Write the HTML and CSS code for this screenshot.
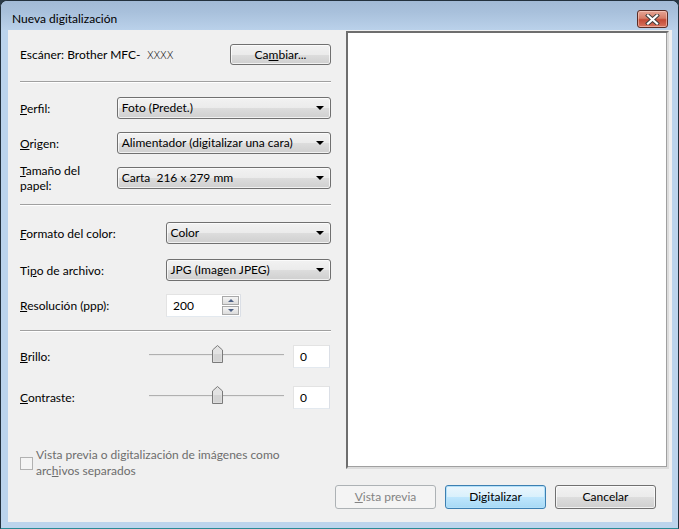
FILE: index.html
```html
<!DOCTYPE html>
<html lang="es">
<head>
  <meta charset="UTF-8">
  <title>Nueva digitalización</title>
  <link rel="stylesheet" href="styles.css">
</head>
<body>
  <div class="ventana">
    <div class="titulo">
      <span class="titulo-texto">Nueva digitalización</span>
      <button class="cerrar" aria-label="Cerrar">
        <svg width="15" height="11" viewBox="0 0 15 11">
          <path d="M3 1.5 L12 9.5 M12 1.5 L3 9.5" stroke="#3a3a3a" stroke-width="4" stroke-linecap="square" fill="none"/>
          <path d="M3 1.5 L12 9.5 M12 1.5 L3 9.5" stroke="#fff" stroke-width="2.2" stroke-linecap="square" fill="none"/>
        </svg>
      </button>
    </div>

    <div class="cliente">
      <div class="principal">
        <div class="panel">
          <div class="fila escaner">
            <span>Escáner: Brother MFC-&nbsp; <span class="modelo">XXXX</span></span>
            <button class="boton cambiar">Ca<u>m</u>biar...</button>
          </div>

          <div class="separador sep1"></div>

          <div class="fila f-perfil">
            <label class="etiqueta corta"><u>P</u>erfil:</label>
            <div class="combo ancho">Foto (Predet.)<span class="flecha"></span></div>
          </div>
          <div class="fila f-origen">
            <label class="etiqueta corta"><u>O</u>rigen:</label>
            <div class="combo ancho">Alimentador (digitalizar una cara)<span class="flecha"></span></div>
          </div>
          <div class="fila f-papel">
            <label class="etiqueta corta dos-lineas"><u>T</u>amaño del<br>papel:</label>
            <div class="combo ancho">Carta&nbsp; 216 x 279 mm<span class="flecha"></span></div>
          </div>

          <div class="separador sep2"></div>

          <div class="fila f-formato">
            <label class="etiqueta larga"><u>F</u>ormato del color:</label>
            <div class="combo estrecho">Color<span class="flecha"></span></div>
          </div>
          <div class="fila f-tipo">
            <label class="etiqueta larga">Ti<u>p</u>o de archivo:</label>
            <div class="combo estrecho">JPG (Imagen JPEG)<span class="flecha"></span></div>
          </div>
          <div class="fila f-resolucion">
            <label class="etiqueta larga"><u>R</u>esolución (ppp):</label>
            <div class="campo resolucion">
              <span>200</span>
              <div class="giro">
                <div class="giro-btn"><span class="tri arriba"></span></div>
                <div class="giro-btn"><span class="tri abajo"></span></div>
              </div>
            </div>
          </div>

          <div class="separador sep3"></div>

          <div class="fila f-brillo">
            <label class="etiqueta deslizador-et"><u>B</u>rillo:</label>
            <svg class="deslizador" width="136" height="20" viewBox="0 0 136 20">
              <line x1="0" y1="9.5" x2="135" y2="9.5" stroke="#b0b0b0"/>
              <line x1="0" y1="10.5" x2="135" y2="10.5" stroke="#e8e8e8"/>
              <path d="M63.5 17.5 V5 L68.5 0.5 L73.5 5 V17.5 Z" fill="#e3e3e3" stroke="#7a7a7a"/>
              <path d="M64.5 16.5 V9 H72.5 V16.5 Z" fill="#d4d4d4"/>
            </svg>
            <div class="campo valor">0</div>
          </div>
          <div class="fila f-contraste">
            <label class="etiqueta deslizador-et"><u>C</u>ontraste:</label>
            <svg class="deslizador" width="136" height="20" viewBox="0 0 136 20">
              <line x1="0" y1="9.5" x2="135" y2="9.5" stroke="#b0b0b0"/>
              <line x1="0" y1="10.5" x2="135" y2="10.5" stroke="#e8e8e8"/>
              <path d="M63.5 17.5 V5 L68.5 0.5 L73.5 5 V17.5 Z" fill="#e3e3e3" stroke="#7a7a7a"/>
              <path d="M64.5 16.5 V9 H72.5 V16.5 Z" fill="#d4d4d4"/>
            </svg>
            <div class="campo valor">0</div>
          </div>

          <div class="casilla">
            <span class="caja"></span>
            <span class="casilla-texto">Vista previa o digitalización de imágenes como<br>arc<u>h</u>ivos separados</span>
          </div>
        </div>

        <div class="vista"></div>
      </div>

      <div class="pie">
        <button class="boton deshabilitado"><u>V</u>ista previa</button>
        <button class="boton predeterminado">Digitalizar</button>
        <button class="boton">Cancelar</button>
      </div>
    </div>
  </div>
</body>
</html>
```

FILE: styles.css
```css
* {
  box-sizing: border-box;
}

body {
  margin: 0;
  width: 679px;
  height: 529px;
  overflow: hidden;
  background: #2b3a47;
  font-family: 'Lato', 'Liberation Sans', sans-serif;
  font-size: 12px;
  color: #000;
}

.ventana {
  width: 679px;
  height: 529px;
  border: 1px solid #23313d;
  border-bottom-color: #2a8a95;
  border-radius: 7px 7px 0 0;
  background: #bcd4ec;
  display: flex;
  flex-direction: column;
}

.titulo {
  height: 29px;
  display: flex;
  align-items: flex-start;
  justify-content: space-between;
  padding: 0 10px 0 11px;
  border-radius: 6px 6px 0 0;
  background: linear-gradient(to bottom, #a2bad6 0%, #a9c1dc 40%, #bad1ea 100%);
}

.titulo-texto {
  margin-top: 10px;
  font-size: 12px;
  color: #000;
}

.cerrar {
  margin-top: 9px;
  width: 31px;
  height: 18px;
  padding: 0;
  border: 1px solid #5a2d26;
  border-radius: 3px;
  background: linear-gradient(to bottom, #e6a595 0%, #d67d68 45%, #c34a36 55%, #d8745e 100%);
  box-shadow: inset 0 0 0 1px rgba(255, 220, 210, 0.5);
  display: flex;
  align-items: center;
  justify-content: center;
}

.cliente {
  flex: 1;
  margin: 0 6px 6px 7px;
  background: #f0f0f0;
  display: flex;
  flex-direction: column;
}

.principal {
  display: flex;
  height: 441px;
}

.panel {
  width: 311px;
  margin-left: 12px;
  display: flex;
  flex-direction: column;
}

.fila {
  display: flex;
  align-items: center;
}

.escaner {
  margin-top: 14px;
  height: 21px;
  justify-content: space-between;
}

.modelo {
  font-family: 'DejaVu Sans', sans-serif;
  font-size: 10.5px;
  font-weight: 200;
  letter-spacing: -0.6px;
  color: #000;
}

.separador {
  height: 2px;
  border-top: 1px solid #a0a0a0;
  border-bottom: 1px solid #fff;
}

.sep1 { margin-top: 16px; }
.sep2 { margin-top: 11px; }
.sep3 { margin-top: 13px; }

.f-perfil { margin-top: 14px; }
.f-origen { margin-top: 13px; }
.f-papel { margin-top: 9px; height: 30px; }
.f-formato { margin-top: 16px; }
.f-tipo { margin-top: 15px; }
.f-resolucion { margin-top: 13px; }
.f-brillo { margin-top: 13px; }
.f-contraste { margin-top: 18px; }

.etiqueta.corta { width: 97px; }
.etiqueta.larga { width: 146px; }
.etiqueta.deslizador-et { width: 129px; }

.dos-lineas {
  line-height: 15px;
}

.combo {
  position: relative;
  height: 22px;
  padding: 0 0 1px 4px;
  display: flex;
  align-items: center;
  border: 1px solid #707070;
  border-radius: 3px;
  background: linear-gradient(to bottom, #f2f2f2 0%, #ebebeb 50%, #dddddd 51%, #cfcfcf 100%);
  box-shadow: inset 0 0 0 1px rgba(255, 255, 255, 0.7);
}

.combo.ancho { width: 215px; }
.combo.estrecho { width: 166px; }

.flecha {
  position: absolute;
  right: 6px;
  top: 8px;
  border-left: 4px solid transparent;
  border-right: 4px solid transparent;
  border-top: 4px solid #000;
}

.campo {
  height: 23px;
  border: 1px solid #abadb3;
  border-top-color: #e3e3e3;
  border-left-color: #e3e3e3;
  border-right-color: #dbdfe6;
  border-bottom-color: #e3e9ef;
  background: #fff;
  display: flex;
  align-items: center;
  padding-left: 6px;
}

.resolucion {
  width: 75px;
  justify-content: space-between;
  padding-right: 1px;
}

.giro {
  display: flex;
  flex-direction: column;
  gap: 1px;
}

.giro-btn {
  width: 17px;
  height: 9px;
  border: 1px solid #a8a8a8;
  background: linear-gradient(to bottom, #f5f5f5, #dcdcdc);
  display: flex;
  align-items: center;
  justify-content: center;
}

.tri {
  border-left: 3px solid transparent;
  border-right: 3px solid transparent;
}

.tri.arriba { border-bottom: 3px solid #4d6185; }
.tri.abajo { border-top: 3px solid #4d6185; }

.deslizador {
  margin-top: -4px;
}

.valor {
  width: 37px;
  margin-left: 8px;
}

.casilla {
  margin-top: 38px;
  display: flex;
  align-items: flex-start;
  color: #6d6d6d;
  line-height: 16px;
}

.caja {
  width: 13px;
  height: 13px;
  margin-top: 10px;
  margin-right: 3px;
  border: 1px solid #b1b1b1;
  background: #f4f4f4;
}

.vista {
  width: 323px;
  height: 438px;
  margin: 1px 0 0 15px;
  background: #fff;
  border: 2px solid #6e6e6e;
  border-right-color: #dcdcdc;
  border-bottom-color: #dcdcdc;
  box-shadow: inset -1px -1px 0 #a0a0a0;
}

.pie {
  display: flex;
  justify-content: flex-end;
  gap: 9px;
  margin-top: 14px;
  padding-right: 16px;
}

.boton {
  width: 101px;
  height: 24px;
  padding: 0 0 1px;
  font-family: inherit;
  font-size: 12px;
  color: #000;
  border: 1px solid #707070;
  border-radius: 3px;
  background: linear-gradient(to bottom, #f2f2f2 0%, #ebebeb 50%, #dddddd 51%, #cfcfcf 100%);
  box-shadow: inset 0 0 0 1px rgba(255, 255, 255, 0.7);
}

.cambiar {
  height: 21px;
}

.predeterminado {
  border-color: #3c7fb1;
  background: linear-gradient(to bottom, #eaf6fd 0%, #d9f0fc 50%, #bee6fd 51%, #a7d9f5 100%);
  box-shadow: inset 0 0 0 1px #b3e0f9;
}

.deshabilitado {
  color: #838383;
  border-color: #adb2b5;
  background: #f4f4f4;
  box-shadow: none;
}
```
